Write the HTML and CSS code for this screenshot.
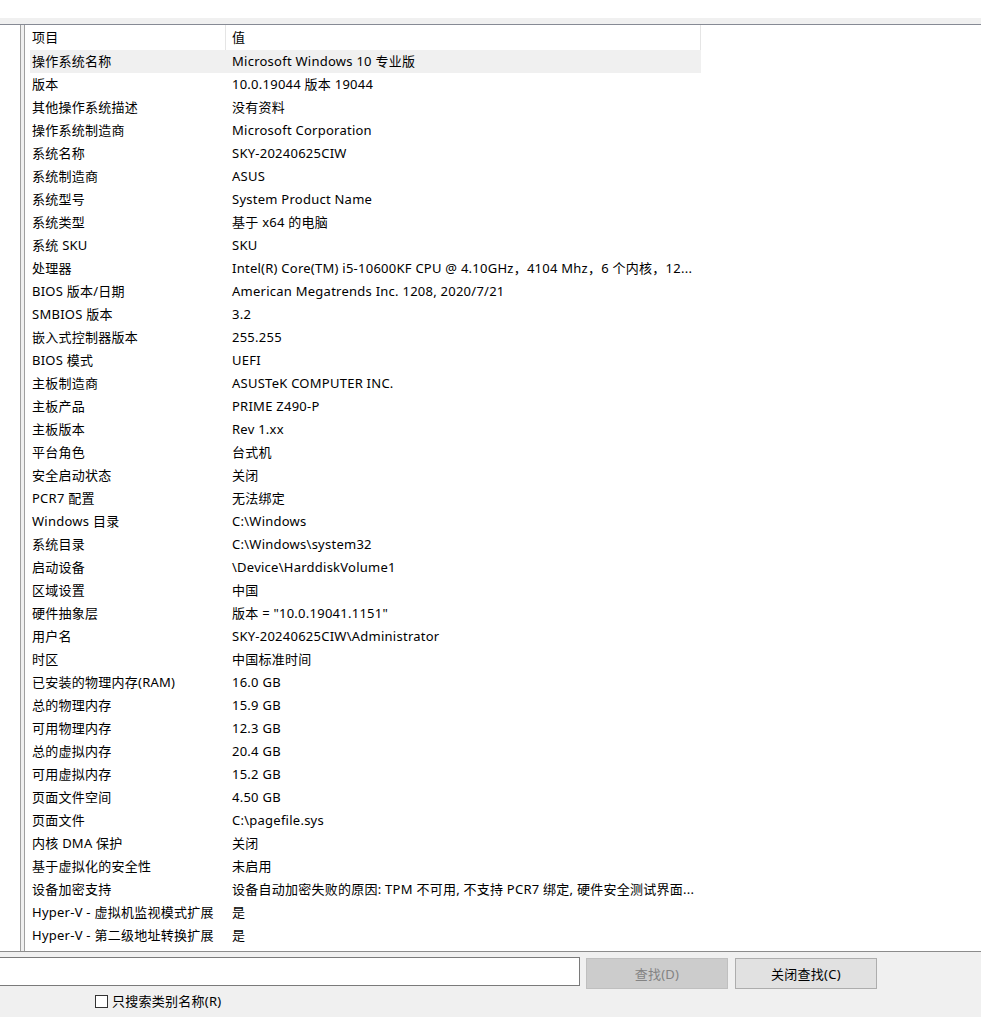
FILE: index.html
```html
<!DOCTYPE html>
<html lang="zh-CN">
<head>
<meta charset="utf-8">
<title>系统信息</title>
<link rel="stylesheet" href="styles.css">
</head>
<body>
<div class="window">
  <div class="top-strip"></div>
  <div class="menu-gap"></div>
  <div class="panes">
    <div class="tree-pane"></div>
    <div class="splitter"></div>
    <div class="list-pane">
      <div class="list-header">
        <div class="hcell hcell-item">项目</div>
        <div class="hcell hcell-value">值</div>
      </div>
      <div class="rows">
        <div class="row selected"><div class="c1">操作系统名称</div><div class="c2">Microsoft Windows 10 专业版</div></div>
        <div class="row"><div class="c1">版本</div><div class="c2">10.0.19044 版本 19044</div></div>
        <div class="row"><div class="c1">其他操作系统描述</div><div class="c2">没有资料</div></div>
        <div class="row"><div class="c1">操作系统制造商</div><div class="c2">Microsoft Corporation</div></div>
        <div class="row"><div class="c1">系统名称</div><div class="c2">SKY-20240625CIW</div></div>
        <div class="row"><div class="c1">系统制造商</div><div class="c2">ASUS</div></div>
        <div class="row"><div class="c1">系统型号</div><div class="c2">System Product Name</div></div>
        <div class="row"><div class="c1">系统类型</div><div class="c2">基于 x64 的电脑</div></div>
        <div class="row"><div class="c1">系统 SKU</div><div class="c2">SKU</div></div>
        <div class="row"><div class="c1">处理器</div><div class="c2">Intel(R) Core(TM) i5-10600KF CPU @ 4.10GHz，4104 Mhz，6 个内核，12...</div></div>
        <div class="row"><div class="c1">BIOS 版本/日期</div><div class="c2">American Megatrends Inc. 1208, 2020/7/21</div></div>
        <div class="row"><div class="c1">SMBIOS 版本</div><div class="c2">3.2</div></div>
        <div class="row"><div class="c1">嵌入式控制器版本</div><div class="c2">255.255</div></div>
        <div class="row"><div class="c1">BIOS 模式</div><div class="c2">UEFI</div></div>
        <div class="row"><div class="c1">主板制造商</div><div class="c2">ASUSTeK COMPUTER INC.</div></div>
        <div class="row"><div class="c1">主板产品</div><div class="c2">PRIME Z490-P</div></div>
        <div class="row"><div class="c1">主板版本</div><div class="c2">Rev 1.xx</div></div>
        <div class="row"><div class="c1">平台角色</div><div class="c2">台式机</div></div>
        <div class="row"><div class="c1">安全启动状态</div><div class="c2">关闭</div></div>
        <div class="row"><div class="c1">PCR7 配置</div><div class="c2">无法绑定</div></div>
        <div class="row"><div class="c1">Windows 目录</div><div class="c2">C:\Windows</div></div>
        <div class="row"><div class="c1">系统目录</div><div class="c2">C:\Windows\system32</div></div>
        <div class="row"><div class="c1">启动设备</div><div class="c2">\Device\HarddiskVolume1</div></div>
        <div class="row"><div class="c1">区域设置</div><div class="c2">中国</div></div>
        <div class="row"><div class="c1">硬件抽象层</div><div class="c2">版本 = "10.0.19041.1151"</div></div>
        <div class="row"><div class="c1">用户名</div><div class="c2">SKY-20240625CIW\Administrator</div></div>
        <div class="row"><div class="c1">时区</div><div class="c2">中国标准时间</div></div>
        <div class="row"><div class="c1">已安装的物理内存(RAM)</div><div class="c2">16.0 GB</div></div>
        <div class="row"><div class="c1">总的物理内存</div><div class="c2">15.9 GB</div></div>
        <div class="row"><div class="c1">可用物理内存</div><div class="c2">12.3 GB</div></div>
        <div class="row"><div class="c1">总的虚拟内存</div><div class="c2">20.4 GB</div></div>
        <div class="row"><div class="c1">可用虚拟内存</div><div class="c2">15.2 GB</div></div>
        <div class="row"><div class="c1">页面文件空间</div><div class="c2">4.50 GB</div></div>
        <div class="row"><div class="c1">页面文件</div><div class="c2">C:\pagefile.sys</div></div>
        <div class="row"><div class="c1">内核 DMA 保护</div><div class="c2">关闭</div></div>
        <div class="row"><div class="c1">基于虚拟化的安全性</div><div class="c2">未启用</div></div>
        <div class="row"><div class="c1">设备加密支持</div><div class="c2">设备自动加密失败的原因: TPM 不可用, 不支持 PCR7 绑定, 硬件安全测试界面...</div></div>
        <div class="row"><div class="c1">Hyper-V - 虚拟机监视模式扩展</div><div class="c2">是</div></div>
        <div class="row"><div class="c1">Hyper-V - 第二级地址转换扩展</div><div class="c2">是</div></div>
      </div>
    </div>
  </div>
  <div class="find-bar">
    <div class="find-row">
      <input class="find-input" type="text" aria-label="查找什么">
      <button class="btn btn-disabled" type="button" disabled>查找(D)</button>
      <button class="btn" type="button">关闭查找(C)</button>
    </div>
    <label class="check-row">
      <span class="check-box"></span>
      <span class="check-label">只搜索类别名称(R)</span>
    </label>
  </div>
</div>
</body>
</html>
```

FILE: styles.css
```css
html, body {
  margin: 0;
  padding: 0;
}

body {
  width: 981px;
  height: 1017px;
  overflow: hidden;
  background: #f0f0f0;
  font-family: "Noto Sans", "Noto Sans CJK SC", sans-serif;
  font-size: 13px;
  letter-spacing: 0.25px;
  color: #000;
}

.window {
  display: flex;
  flex-direction: column;
  width: 981px;
  height: 1017px;
}

.top-strip {
  height: 18px;
  background: #ffffff;
}

.menu-gap {
  height: 6px;
  background: #f0f0f0;
}

.panes {
  display: flex;
  height: 926px;
  border-top: 1px solid #868a94;
  border-bottom: 1px solid #8c8c8c;
  background: #f0f0f0;
}

.tree-pane {
  width: 20px;
  background: #ffffff;
  border-right: 1px solid #a0a0a0;
}

.splitter {
  width: 3px;
}

.list-pane {
  flex: 1;
  background: #ffffff;
  border-left: 1px solid #a0a0a0;
  overflow: hidden;
}

.list-header {
  display: flex;
  height: 25px;
}

.hcell {
  box-sizing: border-box;
  height: 25px;
  line-height: 25px;
  border-right: 1px solid #e5e5e5;
  white-space: nowrap;
}

.hcell-item {
  width: 201px;
  padding-left: 7px;
}

.hcell-value {
  width: 475px;
  padding-left: 6px;
}

.rows {
  display: flex;
  flex-direction: column;
  padding-left: 5px;
}

.row {
  display: grid;
  grid-template-columns: 196px 475px;
  width: 671px;
  height: 23px;
  line-height: 23px;
}

.row.selected {
  background: #f0f0f0;
}

.c1, .c2 {
  white-space: nowrap;
  overflow: hidden;
}

.c1 {
  padding-left: 2px;
}

.c2 {
  padding-left: 6px;
}

.find-bar {
  flex: 1;
  display: flex;
  flex-direction: column;
  background: #f0f0f0;
}

.find-row {
  display: flex;
  align-items: flex-start;
  height: 37px;
}

.find-input {
  box-sizing: border-box;
  width: 580px;
  height: 29px;
  margin: 5px 6px 0 0;
  border: 1px solid #7a7a7a;
  border-left: none;
  background: #ffffff;
  padding: 0;
  outline: none;
}

.btn {
  box-sizing: border-box;
  width: 142px;
  height: 31px;
  margin: 6px 7px 0 0;
  border: 1px solid #adadad;
  background: #e1e1e1;
  font-family: "Noto Sans", "Noto Sans CJK SC", sans-serif;
  font-size: 13px;
  letter-spacing: 0.25px;
  color: #000;
  padding: 0;
}

.btn-disabled {
  background: #cccccc;
  border-color: #bfbfbf;
  color: #838383;
}

.check-row {
  display: flex;
  align-items: center;
  height: 13px;
  margin-top: 6px;
  padding-left: 95px;
}

.check-box {
  box-sizing: border-box;
  width: 13px;
  height: 13px;
  border: 1px solid #333333;
  background: #ffffff;
}

.check-label {
  margin-left: 4px;
  line-height: 13px;
  white-space: nowrap;
}
```
